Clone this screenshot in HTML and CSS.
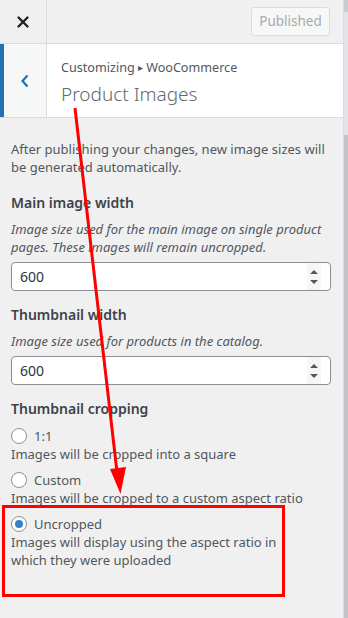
FILE: index.html
```html
<!DOCTYPE html>
<html lang="en">
<head>
  <meta charset="UTF-8" />
  <meta name="viewport" content="width=device-width, initial-scale=1.0" />
  <title>Customizing WooCommerce</title>
  <link rel="stylesheet" href="styles.css">
</head>
<body>
  <div class="frame">
    <div class="panel">
      <div class="topbar">
        <div class="close">
          <svg width="14" height="14" viewBox="0 0 14 14"><path d="M2.5 2.5 L11.5 11.5 M11.5 2.5 L2.5 11.5" stroke="#1d2327" stroke-width="2.4" stroke-linecap="round"/></svg>
        </div>
        <div class="publish">Published</div>
      </div>

      <div class="section-head">
        <div class="back">
          <svg width="10" height="14" viewBox="0 0 10 14"><path d="M7.5 1.5 L2.5 7 L7.5 12.5" fill="none" stroke="#2271b1" stroke-width="2.2"/></svg>
        </div>
        <div class="titles">
          <div class="crumb">Customizing <span class="tri">&#9656;</span> WooCommerce</div>
          <div class="title">Product Images</div>
        </div>
      </div>

      <div class="content">
        <p class="intro">After publishing your changes, new image sizes will be generated automatically.</p>

        <div class="field">
          <div class="label">Main image width</div>
          <div class="desc">Image size used for the main image on single product pages. These images will remain uncropped.</div>
          <div class="number">
            <span>600</span>
            <div class="spin"><i class="up"></i><i class="down"></i></div>
          </div>
        </div>

        <div class="field">
          <div class="label">Thumbnail width</div>
          <div class="desc">Image size used for products in the catalog.</div>
          <div class="number">
            <span>600</span>
            <div class="spin"><i class="up"></i><i class="down"></i></div>
          </div>
        </div>

        <div class="field">
          <div class="label">Thumbnail cropping</div>
          <div class="option">
            <div class="radio-row"><span class="radio"></span>1:1</div>
            <div class="hint">Images will be cropped into a square</div>
          </div>
          <div class="option">
            <div class="radio-row"><span class="radio"></span>Custom</div>
            <div class="hint">Images will be cropped to a custom aspect ratio</div>
          </div>
          <div class="option highlight">
            <div class="radio-row"><span class="radio checked"></span>Uncropped</div>
            <div class="hint">Images will display using the aspect ratio in which they were uploaded</div>
          </div>
        </div>
      </div>
    </div>
    <div class="scrollbar"></div>
  </div>

  <!-- annotation arrow over the page -->
  <svg class="arrow" width="348" height="618" viewBox="0 0 348 618">
    <line x1="75" y1="108" x2="117" y2="472" stroke="#f00" stroke-width="3"/>
    <polygon points="110,469 126,467 120.5,494" fill="#f00"/>
  </svg>
</body>
</html>
```

FILE: styles.css
```css
body {
  margin: 0;
  width: 348px;
  height: 618px;
  overflow: hidden;
  background: #f0f0f1;
  font-family: 'Noto Sans', 'Open Sans', sans-serif;
  color: #50575e;
}
.frame {
  display: flex;
  height: 618px;
}
.panel {
  flex: 1;
  border-right: 1px solid #dcdcde;
}
/* top bar */
.topbar {
  height: 43px;
  display: flex;
  align-items: center;
  border-bottom: 1px solid #dcdcde;
}
.close {
  width: 46px;
  height: 43px;
  border-right: 1px solid #dcdcde;
  display: flex;
  align-items: center;
  justify-content: center;
}
.publish {
  margin-left: auto;
  margin-right: 13px;
  width: 77px;
  height: 27px;
  line-height: 27px;
  text-align: center;
  border: 1px solid #dcdcde;
  border-radius: 3px;
  background: #f6f7f7;
  color: #a7aaad;
  font-size: 13.5px;
}
/* section header */
.section-head {
  height: 73px;
  display: flex;
  border-bottom: 1px solid #dcdcde;
}
.back {
  width: 42px;
  border-left: 4px solid #2271b1;
  border-right: 1px solid #dcdcde;
  background: #f6f7f7;
  display: flex;
  align-items: center;
  justify-content: center;
}
.titles {
  flex: 1;
  background: #fff;
  padding: 14px 0 0 14px;
}
.crumb {
  font-size: 12.6px;
  line-height: 18px;
  color: #50575e;
}
.tri {
  font-size: 10px;
  vertical-align: 1px;
}
.title {
  margin-top: 4px;
  font-size: 19px;
  font-weight: 300;
  line-height: 26px;
  color: #646970;
}
/* content */
.content {
  padding: 22px 11px 0 11px;
  font-size: 13px;
  line-height: 18px;
}
.intro {
  margin: 0 0 17px;
}
.field {
  margin-bottom: 14px;
}
.label {
  font-size: 14px;
  font-weight: 600;
  line-height: 20px;
  color: #3c434a;
  margin-bottom: 7px;
}
.desc {
  font-style: italic;
  margin-bottom: 6px;
}
.number {
  height: 27px;
  background: #fff;
  border: 1px solid #8c8f94;
  border-radius: 4px;
  display: flex;
  align-items: center;
  justify-content: space-between;
  padding-left: 8px;
  width: 310px;
  font-size: 14px;
  color: #2c3338;
}
.spin {
  width: 14px;
  height: 27px;
  margin-right: 9px;
  background: #f6f6f6;
  display: flex;
  flex-direction: column;
  justify-content: center;
  align-items: center;
  gap: 6px;
}
.spin i {
  width: 0;
  height: 0;
  border-left: 4px solid transparent;
  border-right: 4px solid transparent;
}
.spin .up {
  border-bottom: 4px solid #50575e;
}
.spin .down {
  border-top: 4px solid #50575e;
}
.option {
  margin-top: 9px;
}
.radio-row {
  display: flex;
  align-items: center;
  gap: 7px;
  height: 16px;
}
.radio {
  width: 14px;
  height: 14px;
  border: 1px solid #8c8f94;
  border-radius: 50%;
  background: #fff;
  display: flex;
  align-items: center;
  justify-content: center;
}
.radio.checked::after {
  content: "";
  width: 8px;
  height: 8px;
  border-radius: 50%;
  background: #3582c4;
}
.hint {
  margin-top: 1px;
}
.option.highlight {
  margin: -2px 0 0 -9px;
  padding: 8px 0 25px 6px;
  width: 271px;
  border: 3px solid #f00;
}
.scrollbar {
  width: 4px;
  background: linear-gradient(#c7ccd1 0 12px, #e2e4e7 12px 135px, #c3c4c7 135px);
}
.arrow {
  position: absolute;
  top: 0;
  left: 0;
}
```
